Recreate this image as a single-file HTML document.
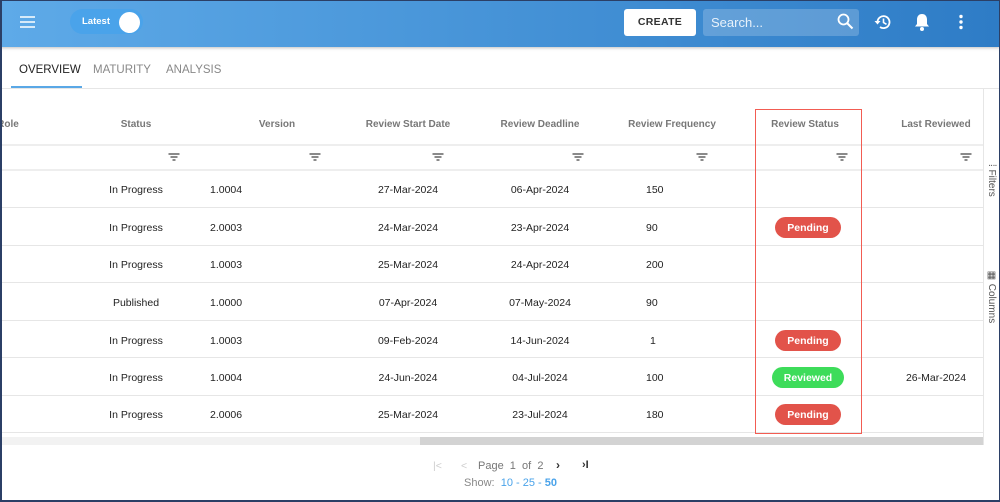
<!DOCTYPE html>
<html><head><style>
*{margin:0;padding:0;box-sizing:border-box}
body{width:1000px;height:502px;overflow:hidden;font-family:"Liberation Sans",sans-serif;background:#fff;position:relative}
.a{position:absolute}
.hdr{left:0;top:0;width:1000px;height:47px;background:linear-gradient(90deg,#5eaae8,#2e7cc6);box-shadow:0 1px 3px rgba(0,0,0,.25)}
.t{font-size:10.5px;color:#222;white-space:nowrap;transform:translateX(-50%)}
.d{font-size:10.5px;color:#222}
.h{font-size:10px;color:#777;font-weight:bold;white-space:nowrap;transform:translateX(-50%)}
.line{left:0;width:983px;height:1px;background:#e6e6e6}
.pill{width:66px;height:21px;border-radius:11px;color:#fff;font-size:10.5px;font-weight:bold;display:flex;align-items:center;justify-content:center;transform:translateX(-50%)}
.f{width:11px;height:8px;transform:translateX(-50%)}
</style></head><body>
<div class="a hdr"></div>
<svg class="a" style="left:20px;top:16px" width="15" height="12"><path d="M0 1h15M0 6h15M0 11h15" stroke="#fff" stroke-width="1.6"/></svg>
<div class="a" style="left:70px;top:9px;width:73px;height:25px;border-radius:13px;background:#4aa3ea"></div>
<div class="a" style="left:82px;top:16px;color:#fff;font-size:9.5px;font-weight:bold">Latest</div>
<div class="a" style="left:119px;top:12px;width:21px;height:21px;border-radius:50%;background:#fff"></div>
<div class="a" style="left:624px;top:9px;width:72px;height:27px;background:#fff;border-radius:3px;font-size:10.5px;font-weight:bold;color:#333;text-align:center;line-height:27px;letter-spacing:.3px">CREATE</div>
<div class="a" style="left:703px;top:9px;width:156px;height:27px;background:rgba(255,255,255,.2);border-radius:3px"></div>
<div class="a" style="left:711px;top:15px;color:#e8f2fb;font-size:13px">Search...</div>
<svg class="a" style="left:837px;top:13px" width="17" height="17"><circle cx="6.5" cy="6.5" r="5" fill="none" stroke="#fff" stroke-width="1.8"/><path d="M10 10l5.5 5.5" stroke="#fff" stroke-width="2"/></svg>
<svg class="a" style="left:874px;top:13px" width="18" height="18" viewBox="0 0 18 18"><path d="M3.5 9A6 6 0 1 1 6 14" fill="none" stroke="#fff" stroke-width="1.8"/><path d="M0.5 8h6l-3 3.5z" fill="#fff"/><path d="M9.5 5.5v4l3 1.8" fill="none" stroke="#fff" stroke-width="1.6"/></svg>
<svg class="a" style="left:913px;top:12px" width="18" height="20" viewBox="0 0 18 20"><path d="M9 2c-3.2 0-5 2.4-5 5.5v4.5L2 14.5h14L14 12V7.5C14 4.4 12.2 2 9 2z" fill="#fff"/><circle cx="9" cy="17" r="2" fill="#fff"/></svg>
<svg class="a" style="left:958px;top:14px" width="6" height="16"><circle cx="3" cy="2.5" r="1.7" fill="#fff"/><circle cx="3" cy="8" r="1.7" fill="#fff"/><circle cx="3" cy="13.5" r="1.7" fill="#fff"/></svg>

<div class="a" style="left:19px;top:64px;font-size:11.5px;color:#222">OVERVIEW</div>
<div class="a" style="left:93px;top:64px;font-size:11.5px;color:#888">MATURITY</div>
<div class="a" style="left:166px;top:64px;font-size:11.5px;color:#888">ANALYSIS</div>
<div class="a" style="left:11px;top:86px;width:71px;height:2px;background:#5aa8e6"></div>
<div class="a" style="left:0;top:88px;width:1000px;height:1px;background:#e6e6e6"></div>

<div class="a h" style="left:8px;top:119px">Role</div>
<div class="a h" style="left:136px;top:119px">Status</div>
<div class="a h" style="left:277px;top:119px">Version</div>
<div class="a h" style="left:408px;top:119px">Review Start Date</div>
<div class="a h" style="left:540px;top:119px">Review Deadline</div>
<div class="a h" style="left:672px;top:119px">Review Frequency</div>
<div class="a h" style="left:805px;top:119px">Review Status</div>
<div class="a h" style="left:936px;top:119px">Last Reviewed</div>
<div class="a line" style="top:144px;height:2px;background:#eee"></div>
<div class="a line" style="top:169px;height:2px;background:#eee"></div>
<svg class="a f" style="left:174px;top:153px" viewBox="0 0 11 8"><path d="M0 1h11M2 4h7M4 7h3" stroke="#444" stroke-width="1.3"/></svg>
<svg class="a f" style="left:315px;top:153px" viewBox="0 0 11 8"><path d="M0 1h11M2 4h7M4 7h3" stroke="#444" stroke-width="1.3"/></svg>
<svg class="a f" style="left:438px;top:153px" viewBox="0 0 11 8"><path d="M0 1h11M2 4h7M4 7h3" stroke="#444" stroke-width="1.3"/></svg>
<svg class="a f" style="left:578px;top:153px" viewBox="0 0 11 8"><path d="M0 1h11M2 4h7M4 7h3" stroke="#444" stroke-width="1.3"/></svg>
<svg class="a f" style="left:702px;top:153px" viewBox="0 0 11 8"><path d="M0 1h11M2 4h7M4 7h3" stroke="#444" stroke-width="1.3"/></svg>
<svg class="a f" style="left:842px;top:153px" viewBox="0 0 11 8"><path d="M0 1h11M2 4h7M4 7h3" stroke="#444" stroke-width="1.3"/></svg>
<svg class="a f" style="left:966px;top:153px" viewBox="0 0 11 8"><path d="M0 1h11M2 4h7M4 7h3" stroke="#444" stroke-width="1.3"/></svg>

<div class="a line" style="top:207px"></div><div class="a line" style="top:245px"></div><div class="a line" style="top:282px"></div><div class="a line" style="top:320px"></div><div class="a line" style="top:357px"></div><div class="a line" style="top:395px"></div><div class="a line" style="top:432px"></div>

<div class="a t" style="left:136px;top:184px">In Progress</div><div class="a d" style="left:210px;top:184px">1.0004</div><div class="a t" style="left:408px;top:184px">27-Mar-2024</div><div class="a t" style="left:540px;top:184px">06-Apr-2024</div><div class="a d" style="left:646px;top:184px">150</div>
<div class="a t" style="left:136px;top:222px">In Progress</div><div class="a d" style="left:210px;top:222px">2.0003</div><div class="a t" style="left:408px;top:222px">24-Mar-2024</div><div class="a t" style="left:540px;top:222px">23-Apr-2024</div><div class="a d" style="left:646px;top:222px">90</div>
<div class="a t" style="left:136px;top:259px">In Progress</div><div class="a d" style="left:210px;top:259px">1.0003</div><div class="a t" style="left:408px;top:259px">25-Mar-2024</div><div class="a t" style="left:540px;top:259px">24-Apr-2024</div><div class="a d" style="left:646px;top:259px">200</div>
<div class="a t" style="left:136px;top:297px">Published</div><div class="a d" style="left:210px;top:297px">1.0000</div><div class="a t" style="left:408px;top:297px">07-Apr-2024</div><div class="a t" style="left:540px;top:297px">07-May-2024</div><div class="a d" style="left:646px;top:297px">90</div>
<div class="a t" style="left:136px;top:335px">In Progress</div><div class="a d" style="left:210px;top:335px">1.0003</div><div class="a t" style="left:408px;top:335px">09-Feb-2024</div><div class="a t" style="left:540px;top:335px">14-Jun-2024</div><div class="a d" style="left:650px;top:335px">1</div>
<div class="a t" style="left:136px;top:372px">In Progress</div><div class="a d" style="left:210px;top:372px">1.0004</div><div class="a t" style="left:408px;top:372px">24-Jun-2024</div><div class="a t" style="left:540px;top:372px">04-Jul-2024</div><div class="a d" style="left:646px;top:372px">100</div><div class="a t" style="left:936px;top:372px">26-Mar-2024</div>
<div class="a t" style="left:136px;top:409px">In Progress</div><div class="a d" style="left:210px;top:409px">2.0006</div><div class="a t" style="left:408px;top:409px">25-Mar-2024</div><div class="a t" style="left:540px;top:409px">23-Jul-2024</div><div class="a d" style="left:646px;top:409px">180</div>

<div class="a pill" style="left:808px;top:217px;background:#e2534a">Pending</div>
<div class="a pill" style="left:808px;top:330px;background:#e2534a">Pending</div>
<div class="a pill" style="left:808px;top:367px;width:72px;background:#3ddc5a">Reviewed</div>
<div class="a pill" style="left:808px;top:404px;background:#e2534a">Pending</div>

<div class="a" style="left:755px;top:109px;width:107px;height:325px;border:1.5px solid #f25c52"></div>

<div class="a" style="left:983px;top:89px;width:1px;height:356px;background:#e6e6e6"></div>
<div class="a" style="left:986px;top:164px;font-size:10px;color:#555;writing-mode:vertical-rl">⁞ Filters</div>
<div class="a" style="left:986px;top:270px;font-size:10px;color:#555;writing-mode:vertical-rl">▦ Columns</div>

<div class="a" style="left:0;top:437px;width:983px;height:8px;background:#f2f2f2"></div>
<div class="a" style="left:420px;top:437px;width:563px;height:8px;background:#d3d3d3"></div>

<div class="a" style="left:433px;top:460px;font-size:10.5px;color:#ccc">|&lt;</div>
<div class="a" style="left:461px;top:460px;font-size:10.5px;color:#ccc">&lt;</div>
<div class="a" style="left:478px;top:460px;font-size:11px;color:#777">Page&nbsp; 1&nbsp; of&nbsp; 2</div>
<div class="a" style="left:556px;top:458px;font-size:12px;color:#333;font-weight:bold">›</div>
<div class="a" style="left:582px;top:459px;font-size:11px;color:#333;font-weight:bold">›I</div>
<div class="a" style="left:464px;top:477px;font-size:11px;color:#888">Show: <span style="color:#4aa3ea">&nbsp;10 - 25 - <b>50</b></span></div>

<div class="a" style="left:0;top:0;width:1000px;height:502px;border:1px solid #2b3f66;border-width:1px 1px 2px 2px;pointer-events:none"></div>
</body></html>
